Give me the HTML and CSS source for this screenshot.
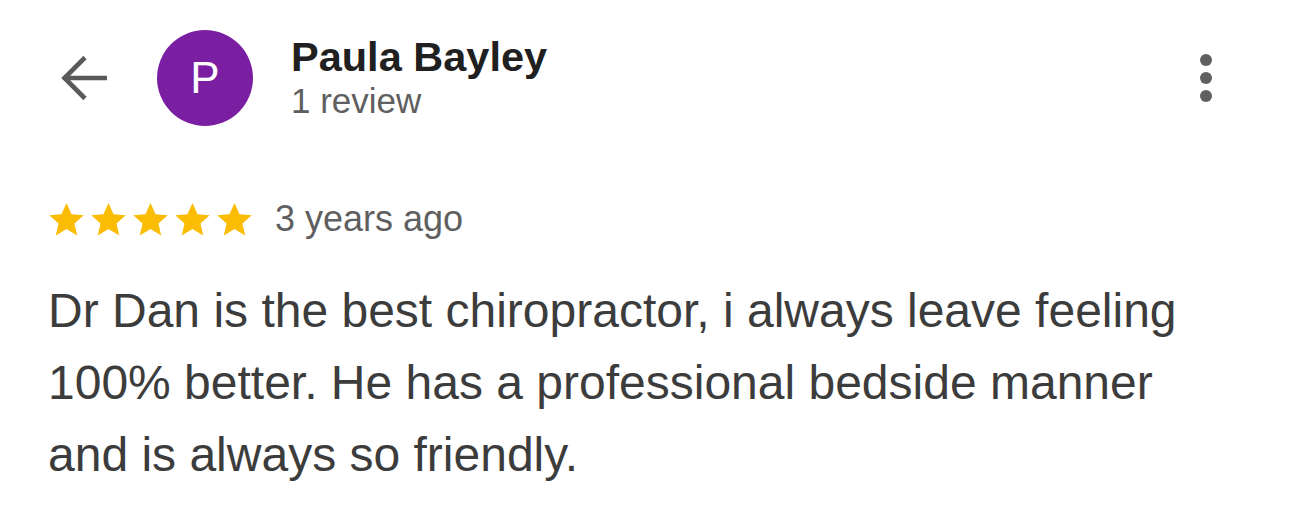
FILE: index.html
```html
<!DOCTYPE html>
<html>
<head>
<meta charset="utf-8">
<link rel="stylesheet" href="styles.css">
</head>
<body>
<div class="page">
  <header class="header">
    <svg class="back" width="48" height="48" viewBox="0 0 48 48" aria-hidden="true">
      <path d="M47 24H5M25 3.5L4.5 24L25 44.5" fill="none" stroke="#5a5a5a" stroke-width="4.6" stroke-linecap="butt" stroke-linejoin="miter"/>
    </svg>
    <div class="avatar">P</div>
    <div class="who">
      <div class="name">Paula Bayley</div>
      <div class="count">1 review</div>
    </div>
    <div class="more" aria-label="More">
      <span></span><span></span><span></span>
    </div>
  </header>
  <div class="meta">
    <div class="stars">
      <svg viewBox="0 0 24 24"><path d="M12 1.8l3.1 6.9 7.5.7-5.7 5 1.7 7.4L12 17.9l-6.6 3.9 1.7-7.4-5.7-5 7.5-.7z"/></svg>
      <svg viewBox="0 0 24 24"><path d="M12 1.8l3.1 6.9 7.5.7-5.7 5 1.7 7.4L12 17.9l-6.6 3.9 1.7-7.4-5.7-5 7.5-.7z"/></svg>
      <svg viewBox="0 0 24 24"><path d="M12 1.8l3.1 6.9 7.5.7-5.7 5 1.7 7.4L12 17.9l-6.6 3.9 1.7-7.4-5.7-5 7.5-.7z"/></svg>
      <svg viewBox="0 0 24 24"><path d="M12 1.8l3.1 6.9 7.5.7-5.7 5 1.7 7.4L12 17.9l-6.6 3.9 1.7-7.4-5.7-5 7.5-.7z"/></svg>
      <svg viewBox="0 0 24 24"><path d="M12 1.8l3.1 6.9 7.5.7-5.7 5 1.7 7.4L12 17.9l-6.6 3.9 1.7-7.4-5.7-5 7.5-.7z"/></svg>
    </div>
    <span class="when">3 years ago</span>
  </div>
  <p class="text">Dr Dan is the best chiropractor, i always leave feeling 100% better. He has a professional bedside manner and is always so friendly.</p>
</div>
</body>
</html>
```

FILE: styles.css
```css
html, body {
  margin: 0;
  padding: 0;
  background: #ffffff;
}
body {
  font-family: "Liberation Sans", Arial, Helvetica, sans-serif;
  width: 1290px;
  height: 511px;
  overflow: hidden;
}
.page {
  padding: 30px 0 0 0;
}
.header {
  display: flex;
  align-items: center;
  height: 96px;
  padding-left: 60px;
  padding-right: 78px;
}
.back {
  flex: none;
  display: block;
}
.avatar {
  flex: none;
  width: 96px;
  height: 96px;
  border-radius: 50%;
  background: #7b1fa2;
  color: #ffffff;
  font-size: 44px;
  line-height: 96px;
  text-align: center;
  margin-left: 49px;
}
.who {
  margin-left: 38px;
  flex: 1;
  align-self: flex-start;
  margin-top: 4px;
}
.name {
  font-weight: bold;
  font-size: 41.5px;
  line-height: 46px;
  color: #202020;
}
.count {
  font-size: 35px;
  line-height: 42px;
  color: #5f5f5f;
}
.more {
  display: flex;
  flex-direction: column;
  gap: 6px;
}
.more span {
  display: block;
  width: 12px;
  height: 12px;
  border-radius: 50%;
  background: #5f5f5f;
}
.meta {
  display: flex;
  align-items: center;
  padding-left: 47px;
  margin-top: 72px;
  height: 42px;
}
.stars {
  display: flex;
  gap: 3px;
}
.stars svg {
  width: 39px;
  height: 39px;
  fill: #fbbc04;
  display: block;
}
.when {
  margin-left: 21px;
  font-size: 36px;
  color: #5f5f5f;
}
.text {
  margin: 35px 0 0 48px;
  width: 1170px;
  font-size: 48px;
  line-height: 72px;
  color: #3c3c3c;
}
```
